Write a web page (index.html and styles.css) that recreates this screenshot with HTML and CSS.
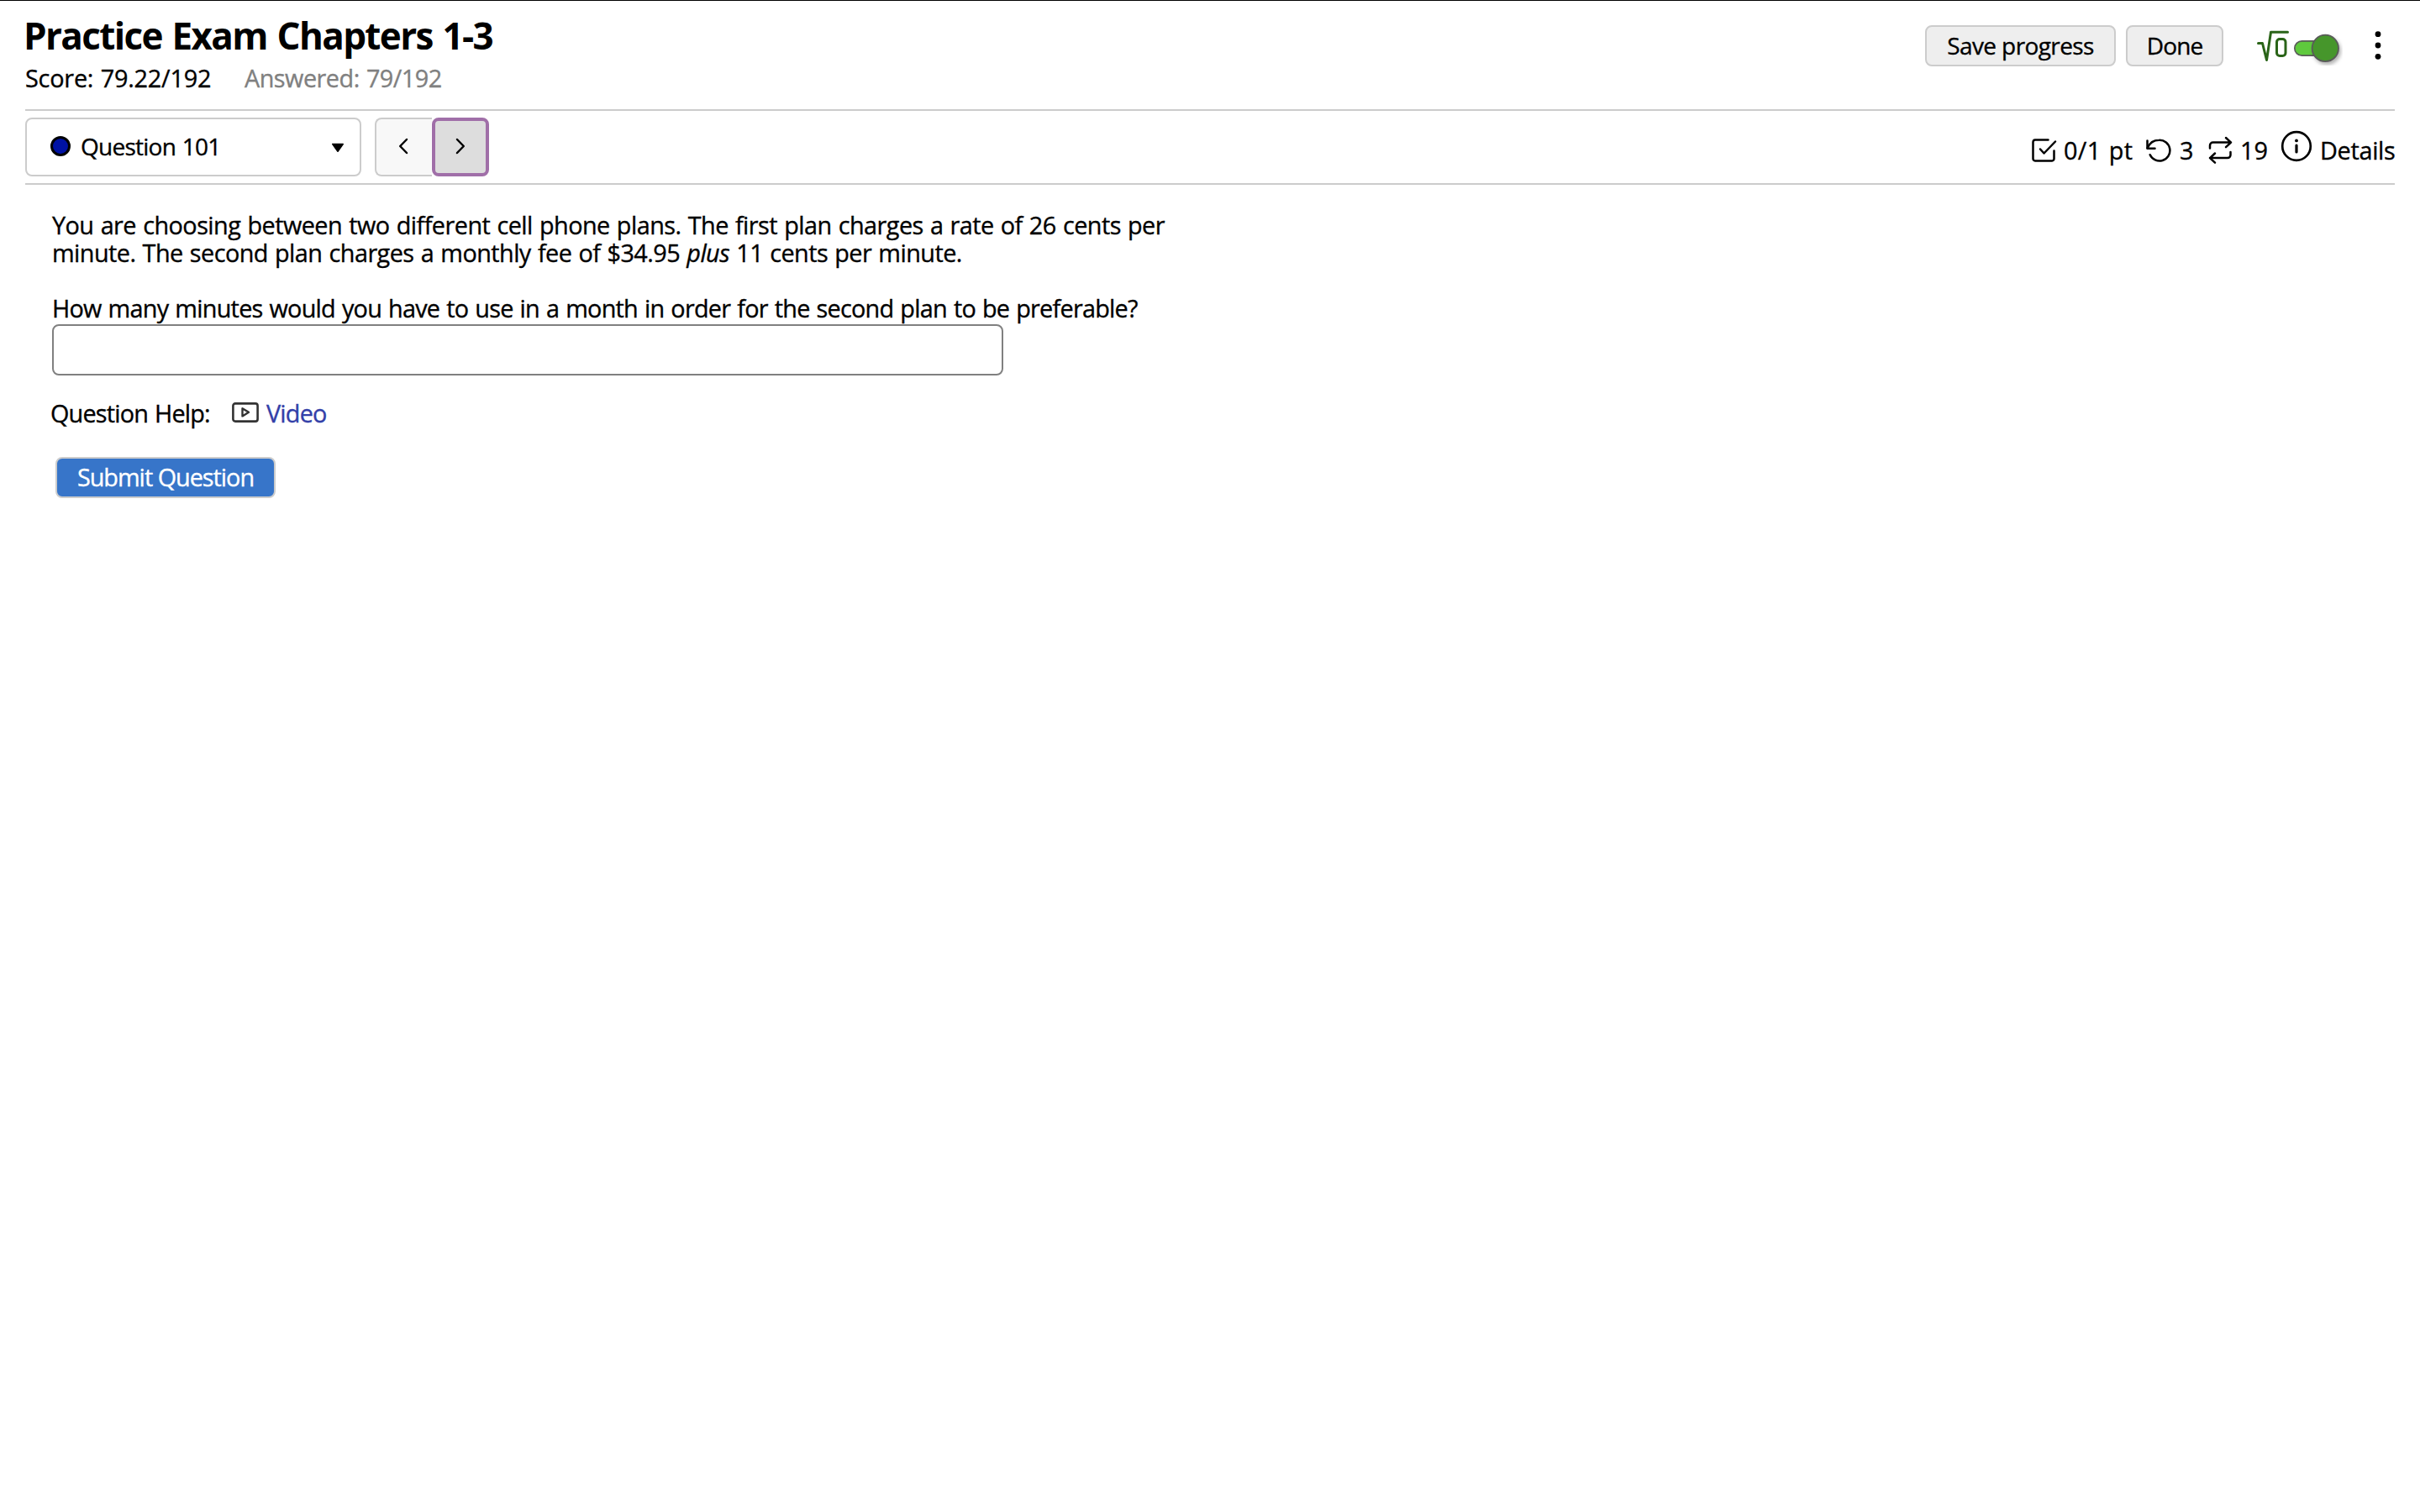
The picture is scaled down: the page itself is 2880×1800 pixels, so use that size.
FILE: index.html
```html
<!DOCTYPE html>
<html lang="en">
<head>
    <meta charset="UTF-8">
    <title>Practice Exam Chapters 1-3</title>
    <link rel="stylesheet" href="styles.css">
</head>
<body>
    <header class="header">
        <div class="header-left">
            <h1>Practice Exam Chapters 1-3</h1>
            <div class="status">
                <span class="score">Score: 79.22/192</span>
                <span class="answered">Answered: 79/192</span>
            </div>
        </div>
        <div class="header-right">
            <button class="btn save">Save progress</button>
            <button class="btn done">Done</button>
            <svg class="math-toggle" width="104" height="48" viewBox="0 0 104 48">
                <g fill="none" stroke="#2a6418" stroke-width="3" stroke-linecap="round" stroke-linejoin="round">
                    <path d="M3.5 21.5h5l5 20L18.5 8.2h20"/>
                    <rect x="25.5" y="16.5" width="10.5" height="20" rx="3.5"/>
                </g>
                <rect x="46.8" y="18.8" width="44" height="17.4" rx="8.7" fill="#5fc93d" stroke="#5a5a5a" stroke-width="1.7"/>
                <circle class="knob" cx="83.3" cy="27.4" r="15.7" fill="#46962b" stroke="#5a5a5a" stroke-width="1.8"/>
            </svg>
            <svg class="more" width="8" height="36" viewBox="0 0 8 36">
                <circle cx="4" cy="4.7" r="3.4"/>
                <circle cx="4" cy="18" r="3.4"/>
                <circle cx="4" cy="31.3" r="3.4"/>
            </svg>
        </div>
    </header>

    <nav class="nav">
        <div class="nav-left">
            <div class="question-select">
                <span class="dot"></span>
                <span class="question-name">Question 101</span>
                <svg class="caret" width="16" height="12" viewBox="0 0 16 12"><path d="M1.8 1.5h12.4L8 10.2z" stroke="#000" stroke-width="1.6" stroke-linejoin="round"/></svg>
            </div>
            <div class="pager">
                <button class="prev" aria-label="Previous">
                    <svg class="line-icon" width="14" height="22" viewBox="0 0 14 22"><path d="M11 3L3.2 11l7.8 8"/></svg>
                </button>
                <button class="next" aria-label="Next">
                    <svg class="line-icon" width="14" height="22" viewBox="0 0 14 22"><path d="M3 3l7.8 8L3 19"/></svg>
                </button>
            </div>
        </div>
        <div class="nav-right">
            <div class="item points">
                <svg class="line-icon" width="32" height="32" viewBox="0 0 32 32">
                    <path d="M21.5 3.5H6A2.7 2.7 0 0 0 3.5 6v20A2.7 2.7 0 0 0 6 28.5h20a2.7 2.7 0 0 0 2.5-2.5V16.5"/>
                    <path d="M12 14.5l4.5 5L30 5.5"/>
                </svg>
                <span>0/1 pt</span>
            </div>
            <div class="item tries">
                <svg class="line-icon" width="32" height="32" viewBox="0 0 32 32">
                    <path d="M3.5 4.5v9.2h9"/>
                    <path d="M3.7 13.3C6 7.5 11 3.7 17.5 3.7a12.4 12.4 0 1 1-10.8 17.5"/>
                </svg>
                <span>3</span>
            </div>
            <div class="item">
                <svg class="line-icon" width="32" height="36" viewBox="0 0 32 36">
                    <path d="M4 15.5v-3.3A3.6 3.6 0 0 1 7.6 8.6H29M23 3l6 5.6-6 5.6"/>
                    <path d="M28.5 20v3.5a3.6 3.6 0 0 1-3.6 3.6H4M10 21.5l-6 5.6 6 5.6"/>
                </svg>
                <span>19</span>
            </div>
            <div class="item details">
                <svg class="info-icon" width="40" height="40" viewBox="0 0 40 40">
                    <circle cx="20" cy="20" r="16.8" fill="none" stroke="#000" stroke-width="2.7"/>
                    <circle cx="20" cy="13.4" r="1.9"/>
                    <path d="M20 19v8" stroke="#000" stroke-width="3.2" stroke-linecap="round"/>
                </svg>
                <span>Details</span>
            </div>
        </div>
    </nav>

    <main class="question">
        <p>
            <span class="line1">You are choosing between two different cell phone plans. The first plan charges a rate of 26 cents per</span><br>
            <span class="line2">minute. The second plan charges a monthly fee of $34.95 <i>plus</i> 11 cents per minute.</span>
        </p>
        <p class="ask">How many minutes would you have to use in a month in order for the second plan to be preferable?</p>
        <input type="text" class="answer" aria-label="Answer">
        <div class="help">
            <span class="help-label">Question Help:</span>
            <svg width="32" height="24" viewBox="0 0 32 24" fill="none" stroke="#333" stroke-linejoin="round">
                <rect x="1.4" y="1.4" width="29.2" height="21.2" rx="2.6" stroke-width="2.6"/>
                <path d="M12.5 7.2v9.2L20 11.8z" stroke-width="2.4"/>
            </svg>
            <a class="video">Video</a>
        </div>
        <button class="btn submit">Submit Question</button>
    </main>
</body>
</html>
```
FILE: styles.css
```css
* {
    box-sizing: border-box;
}
body {
    margin: 0;
    padding: 0 30px;
    border-top: 1px solid #000;
    background-color: #fff;
    color: #000;
    font-family: "Trebuchet MS", "Open Sans", sans-serif;
    font-size: 28.8px;
    font-variant-ligatures: none;
    word-spacing: 1.2px;
    -webkit-text-stroke: 0.35px;
}
h1, p {
    margin: 0;
}
svg {
    display: block;
    flex-shrink: 0;
}
button {
    padding: 0;
    font-family: inherit;
    color: inherit;
}
.header {
    height: 131px;
    display: flex;
    justify-content: space-between;
    border-bottom: 2px solid #ccc;
}
.header-left {
    padding-top: 16px;
}
h1 {
    font-size: 44px;
    line-height: 50px;
    letter-spacing: -1.65px;
    word-spacing: 2px;
    margin-left: -2px;
    -webkit-text-stroke: 0;
}
.status {
    display: flex;
    margin-top: 8px;
    line-height: 36px;
    white-space: nowrap;
}
.score {
    width: 261px;
    letter-spacing: -0.2px;
}
.answered {
    color: #808080;
    letter-spacing: -0.5px;
}
.header-right {
    display: flex;
    align-items: flex-start;
    padding-top: 29px;
    padding-right: 16px;
}
.btn {
    height: 49px;
    background-color: #eee;
    border: 2px solid #ccc;
    border-radius: 8px;
    font-size: 28px;
    line-height: 40px;
    padding-bottom: 1px;
    white-space: nowrap;
}
.save {
    width: 227px;
    letter-spacing: -0.6px;
    margin-right: 12px;
}
.done {
    width: 116px;
    letter-spacing: -0.9px;
    margin-right: 38px;
}
.math-toggle {
    margin-right: 38px;
}
.knob {
    filter: drop-shadow(2px 3px 2px rgba(0, 0, 0, 0.3));
}
.more {
    margin-top: 6px;
}
.nav {
    height: 88px;
    display: flex;
    justify-content: space-between;
    border-bottom: 2px solid #ccc;
}
.nav-left {
    display: flex;
    gap: 16px;
    padding-top: 8px;
}
.question-select {
    width: 400px;
    height: 70px;
    display: flex;
    align-items: center;
    border: 2px solid #ccc;
    border-radius: 8px;
    padding: 0 18px 0 28px;
}
.dot {
    width: 24px;
    height: 24px;
    margin-right: 12px;
    margin-bottom: 2px;
    background-color: #0012a4;
    border: 3px solid #000;
    border-radius: 50%;
}
.question-name {
    flex: 1;
    margin-bottom: 2px;
    font-size: 28px;
    letter-spacing: -0.75px;
}
.caret {
    margin-top: 2px;
}
.line-icon {
    fill: none;
    stroke: #000;
    stroke-width: 2.5;
    stroke-linecap: round;
    stroke-linejoin: round;
}
.pager {
    display: flex;
}
.pager button {
    height: 70px;
    display: flex;
    align-items: center;
    justify-content: center;
    padding-bottom: 2px;
}
.pager .prev {
    width: 68px;
    padding-right: 2px;
    background-color: #f8f8f8;
    border: 2px solid #ccc;
    border-right: none;
    border-radius: 8px 0 0 8px;
}
.next {
    width: 68px;
    background-color: #ddd;
    border: 4px solid #a06fa8;
    border-radius: 8px;
    box-shadow: 0 0 0 1px #fff;
}
.nav-right {
    display: grid;
    grid-template-columns: 136px 74px 87px 138px;
    padding-top: 7px;
    margin-right: -1px;
}
.item {
    display: flex;
    align-items: center;
    gap: 8px;
    white-space: nowrap;
}
.points {
    letter-spacing: 0.4px;
}
.tries {
    gap: 10px;
}
.details {
    letter-spacing: -0.3px;
}
.info-icon {
    margin-bottom: 9px;
}
.question {
    padding: 31px 32px 0;
    line-height: 33px;
}
.question p {
    white-space: nowrap;
}
.line1 {
    letter-spacing: -0.53px;
}
.line2 {
    letter-spacing: -0.54px;
}
.question .ask {
    margin-top: 33px;
    letter-spacing: -0.74px;
}
.answer {
    display: block;
    width: 1132px;
    height: 61px;
    margin-top: 3px;
    border: 2px solid #808080;
    border-radius: 8px;
    background-color: #fff;
}
.help {
    display: flex;
    align-items: center;
    height: 36px;
    margin-top: 26px;
    margin-left: -2px;
}
.help-label {
    width: 216px;
    letter-spacing: -0.8px;
}
.help svg {
    margin-bottom: 1px;
}
.video {
    margin-left: 9px;
    color: #333fa8;
    letter-spacing: -0.8px;
}
.submit {
    display: block;
    width: 262px;
    margin-top: 35px;
    margin-left: 4px;
    background-color: #3775c9;
    color: #fff;
    font-size: 28.8px;
    letter-spacing: -1px;
}
```
